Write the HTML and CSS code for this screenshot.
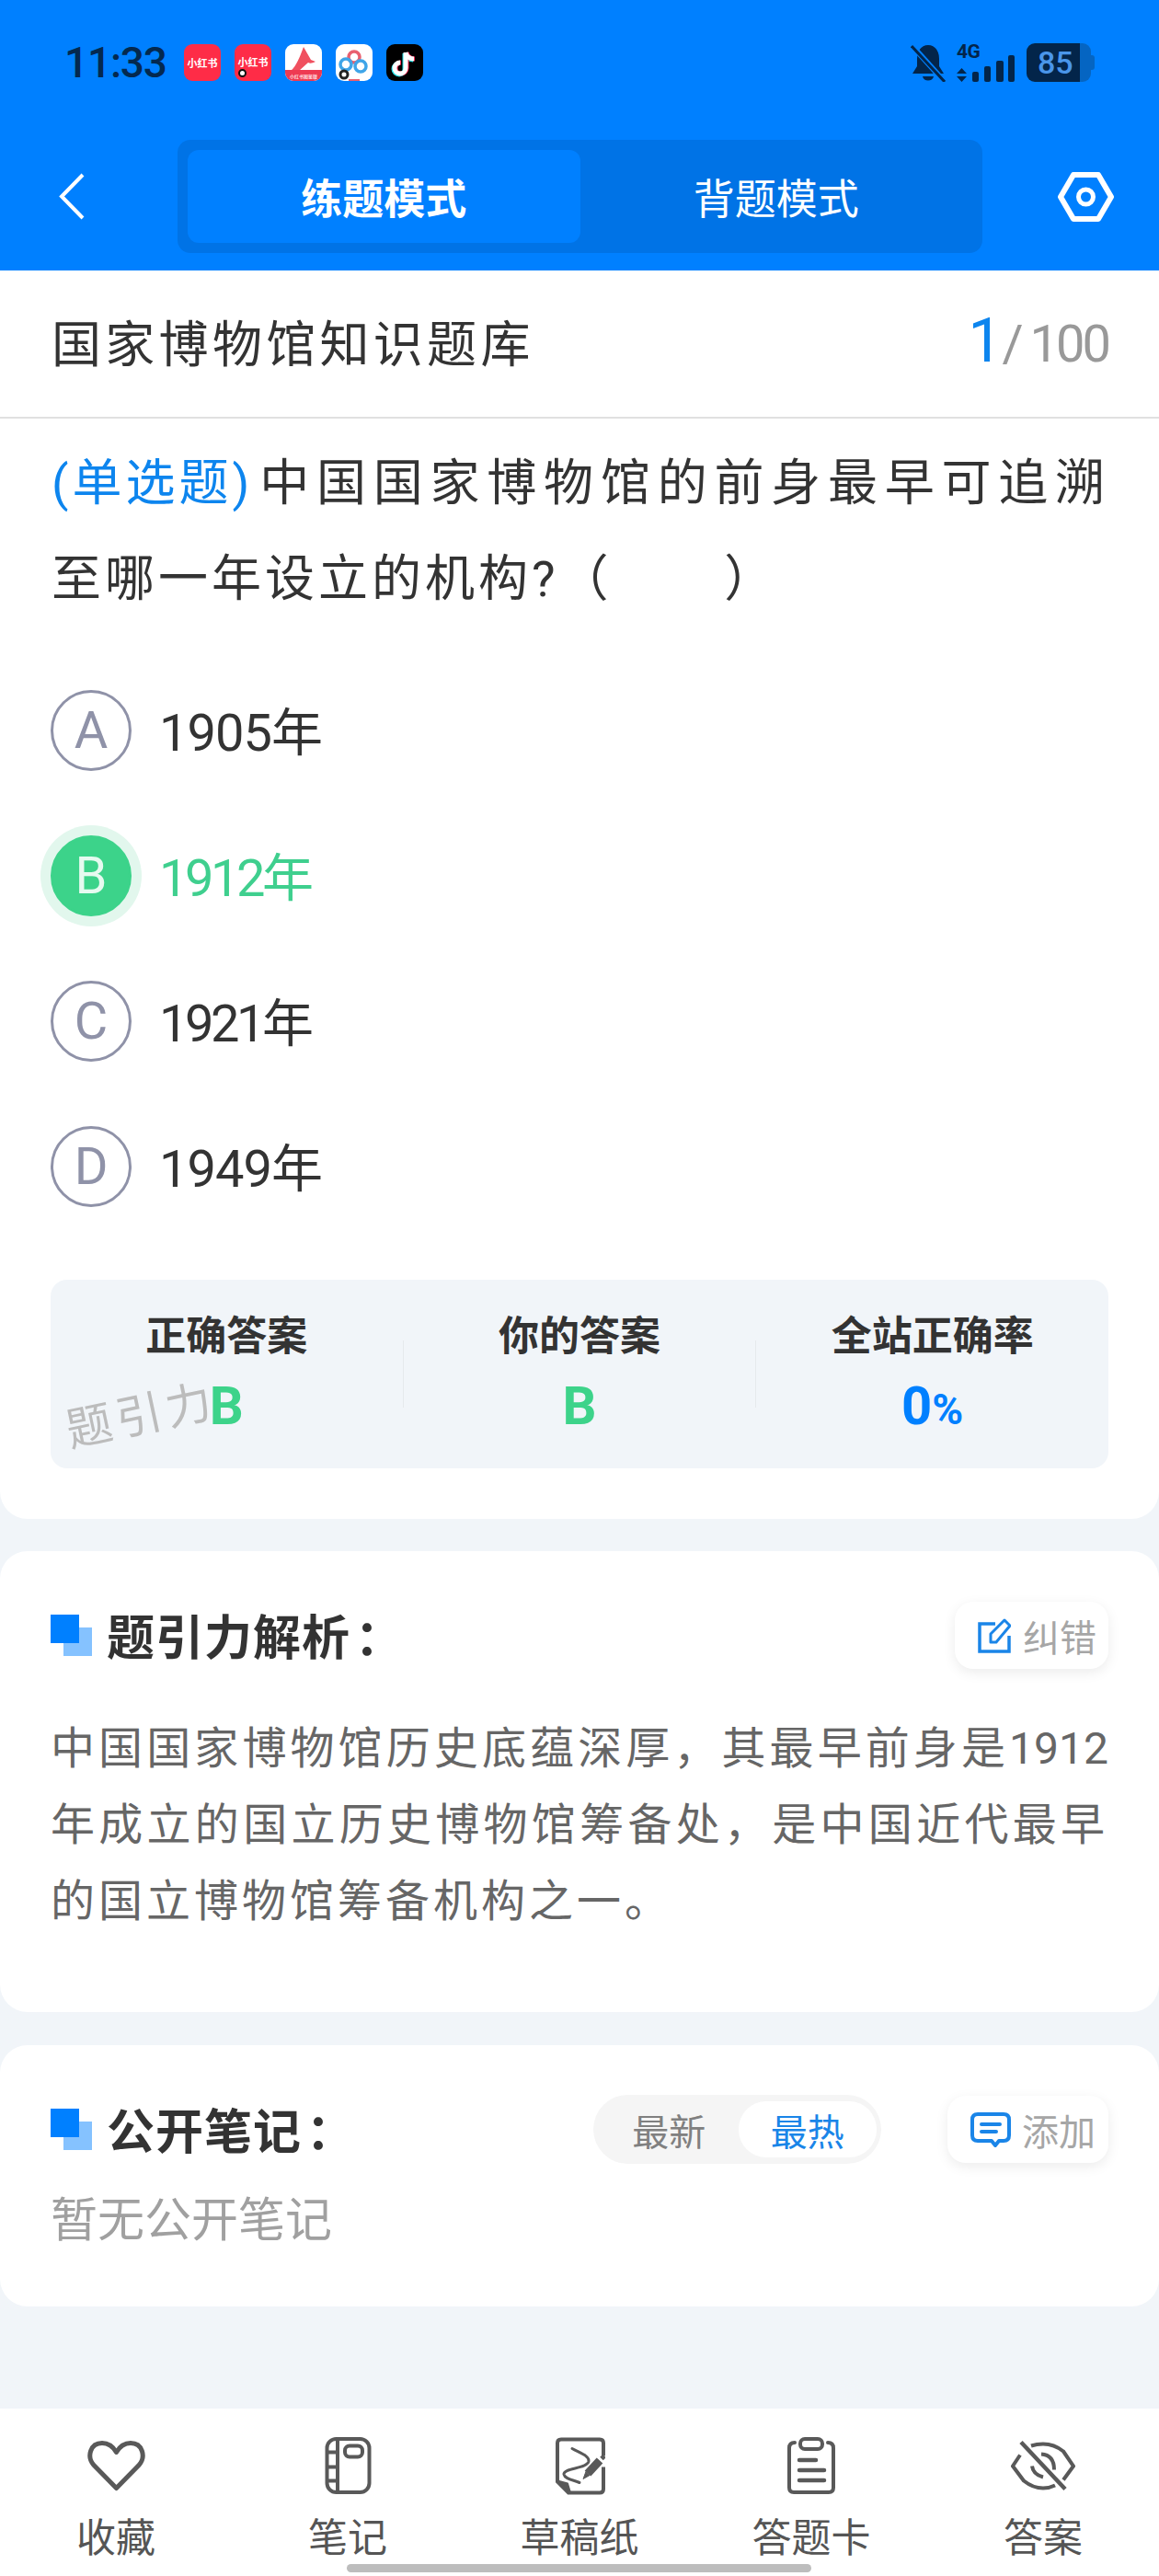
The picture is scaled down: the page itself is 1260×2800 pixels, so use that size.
FILE: index.html
```html
<!DOCTYPE html>
<html lang="zh-CN">
<head>
    <meta charset="UTF-8">
    <meta name="viewport" content="width=device-width, initial-scale=1.0">
    <title>国家博物馆知识题库</title>
    <link rel="stylesheet" href="styles.css">
</head>
<body>
<div class="page">
    <header class="header">
        <div class="status">
            <span class="time">11:33</span>
            <div class="apps">
                <span class="app app-red">小红书</span>
                <span class="app app-red app-narrow">小红书<i class="rec"></i></span>
                <span class="app app-white">
                    <svg viewBox="0 0 40 40" width="40" height="40">
                        <path d="M20 3 L28 17 L33 19 C29 21 27 21 25 20 L15 29 L6 29 C12 24 16 14 20 3Z" fill="#f0505f"/>
                        <path d="M0 28 H40 V33 A7 7 0 0 1 33 40 H7 A7 7 0 0 1 0 33Z" fill="#ee3a52"/>
                        <text x="20" y="37" class="app-band">小红书图鉴版</text>
                    </svg>
                </span>
                <span class="app app-white">
                    <svg viewBox="0 0 40 40" width="40" height="40">
                        <circle cx="20" cy="14" r="6" fill="none" stroke="#e9606f" stroke-width="3.5"/>
                        <circle cx="11" cy="22" r="6" fill="none" stroke="#3fa5e8" stroke-width="3.5"/>
                        <circle cx="27" cy="24" r="6" fill="none" stroke="#3fa5e8" stroke-width="3.5"/>
                        <circle cx="9" cy="33" r="4" fill="#fff" stroke="#222" stroke-width="3"/>
                        <rect x="14" y="38" width="12" height="2" fill="#e9606f"/>
                    </svg>
                </span>
                <span class="app app-black">
                    <svg viewBox="0 0 40 40" width="40" height="40" fill="none" stroke-width="5">
                        <path d="M21 9 V26 A6 6 0 1 1 15 20 M21 9 C22 13 25 16 30 16" stroke="#25e0e6" transform="translate(-1 1)"/>
                        <path d="M21 9 V26 A6 6 0 1 1 15 20 M21 9 C22 13 25 16 30 16" stroke="#fe2c55" transform="translate(1 0)"/>
                        <path d="M21 9 V26 A6 6 0 1 1 15 20 M21 9 C22 13 25 16 30 16" stroke="#fff"/>
                    </svg>
                </span>
            </div>
            <div class="indicators">
                <svg class="bell" viewBox="0 0 38 42" width="38" height="42">
                    <path d="M19 2 C27 2 31 9 31 17 V25 L36 33 H2 L7 25 V17 C7 9 11 2 19 2Z M13 36 H25 C24 42 14 42 13 36Z" fill="#03254a"/>
                    <path d="M1 2 L36 41" stroke="#0080ff" stroke-width="6"/>
                    <path d="M1 3 L37 42" stroke="#03254a" stroke-width="3"/>
                </svg>
                <div class="signal">
                    <span class="signal-text">4G</span>
                    <svg viewBox="0 0 63 42" width="63" height="42">
                        <path d="M5.5 27 L11 33 H0Z M5.5 42 L11 36 H0Z" fill="#03254a"/>
                        <rect x="17" y="31" width="7" height="11" rx="2" fill="#03254a"/>
                        <rect x="30" y="25" width="7" height="17" rx="2" fill="#03254a"/>
                        <rect x="43" y="19" width="8" height="23" rx="2" fill="#03254a"/>
                        <rect x="56" y="13" width="7" height="29" rx="2" fill="#03254a"/>
                    </svg>
                </div>
                <div class="battery"><span class="battery-level">85</span></div>
            </div>
        </div>
        <nav class="nav">
            <svg class="back" viewBox="0 0 28 51" width="28" height="51">
                <path d="M26 2 L3 25.5 L26 49" fill="none" stroke="#fff" stroke-width="4"/>
            </svg>
            <div class="mode">
                <span class="mode-item active">练题模式</span>
                <span class="mode-item">背题模式</span>
            </div>
            <svg class="settings" viewBox="0 0 61 54" width="61" height="54" fill="none" stroke="#fff">
                <path d="M17 3 H44 L58 27 L44 51 H17 L3 27Z" stroke-width="6" stroke-linejoin="round"/>
                <circle cx="30.5" cy="27" r="8" stroke-width="5"/>
            </svg>
        </nav>
    </header>

    <section class="card card-question">
        <div class="paper-title">
            <span class="paper-name">国家博物馆知识题库</span>
            <span class="count"><b>1</b><i>/</i>100</span>
        </div>
        <div class="question">
            <p class="question-first"><span class="qtype">(单选题)</span><span>中国国家博物馆的前身最早可追溯</span></p>
            <p>至哪一年设立的机构?（&nbsp;&nbsp;&nbsp;&nbsp;&nbsp;&nbsp;&nbsp;）</p>
        </div>

        <div class="options">
            <div class="option">
                <span class="option-key">A</span>
                <span class="option-text"><span class="digits">1905</span>年</span>
            </div>
            <div class="option selected">
                <span class="option-key">B</span>
                <span class="option-text"><span class="digits tight">1912</span>年</span>
            </div>
            <div class="option">
                <span class="option-key">C</span>
                <span class="option-text"><span class="digits tight">1921</span>年</span>
            </div>
            <div class="option">
                <span class="option-key">D</span>
                <span class="option-text"><span class="digits">1949</span>年</span>
            </div>
        </div>

        <div class="result">
            <div class="stat">
                <div class="stat-label">正确答案</div>
                <div class="stat-value green">B</div>
            </div>
            <div class="stat-sep"></div>
            <div class="stat">
                <div class="stat-label">你的答案</div>
                <div class="stat-value green">B</div>
            </div>
            <div class="stat-sep"></div>
            <div class="stat">
                <div class="stat-label">全站正确率</div>
                <div class="stat-value blue">0<small>%</small></div>
            </div>
            <span class="watermark">题引力</span>
        </div>
    </section>

    <section class="card card-analysis">
        <div class="card-head">
            <svg class="bullet" viewBox="0 0 45 45" width="45" height="45">
                <rect x="14" y="14" width="31" height="31" fill="#85c2ff"/>
                <rect width="31" height="31" fill="#0080ff"/>
            </svg>
            <h2 class="card-title">题引力解析<span class="colon">：</span></h2>
            <button class="tool-btn">
                <svg viewBox="0 0 36 38" width="36" height="38" fill="none" stroke="#1a85e8" stroke-width="3.5">
                    <path d="M19 6 H2 V36 H34 V19"/>
                    <path d="M14 26 V17 L29 2 L35 8 L20 26Z" stroke-width="3" stroke-linejoin="round"/>
                </svg>
                <span>纠错</span>
            </button>
        </div>
        <p class="analysis">中国国家博物馆历史底蕴深厚，其最早前身是<span class="num">1912</span>年成立的国立历史博物馆筹备处，是中国近代最早的国立博物馆筹备机构之一。</p>
    </section>

    <section class="card card-notes">
        <div class="card-head">
            <svg class="bullet" viewBox="0 0 45 45" width="45" height="45">
                <rect x="14" y="14" width="31" height="31" fill="#85c2ff"/>
                <rect width="31" height="31" fill="#0080ff"/>
            </svg>
            <h2 class="card-title">公开笔记<span class="colon">：</span></h2>
            <div class="sort">
                <span class="sort-item">最新</span>
                <span class="sort-item active">最热</span>
            </div>
            <button class="tool-btn tool-add">
                <svg viewBox="0 0 44 38" width="44" height="38" fill="none" stroke="#1a85e8" stroke-width="4">
                    <path d="M8 2 H36 Q42 2 42 8 V25 Q42 31 36 31 H31 L27 36 L23 31 H8 Q2 31 2 25 V8 Q2 2 8 2Z" stroke-linejoin="round"/>
                    <path d="M12 13 H32 M12 21 H28" stroke-linecap="round"/>
                </svg>
                <span>添加</span>
            </button>
        </div>
        <p class="empty">暂无公开笔记</p>
    </section>

    <footer class="tabbar">
        <div class="tab">
            <svg viewBox="0 0 63 55" width="63" height="55" fill="none" stroke="#595959" stroke-width="5" stroke-linejoin="round">
                <path d="M31.5 52 L7 27 C-1 18 3 3 16 3 C23 3 28 7 31.5 13 C35 7 40 3 47 3 C60 3 64 18 56 27Z"/>
            </svg>
            <span>收藏</span>
        </div>
        <div class="tab">
            <svg viewBox="0 0 51 63" width="51" height="63" fill="none" stroke="#595959" stroke-width="4">
                <rect x="2.5" y="2.5" width="46" height="58" rx="10"/>
                <path d="M14 3 V60 M3 17 H14 M3 33 H14 M3 48 H14"/>
                <rect x="22" y="10" width="19" height="12" rx="5"/>
            </svg>
            <span>笔记</span>
        </div>
        <div class="tab">
            <svg viewBox="0 0 55 63" width="55" height="63" fill="none" stroke="#595959" stroke-width="4">
                <path d="M53 21 V7 Q53 3 49 3 H7 Q3 3 3 7 V49 L15 61 H49 Q53 61 53 57 V33"/>
                <path d="M3 48 L14 51 L17 61 Z" fill="#595959" stroke-width="2" stroke-linejoin="round"/>
                <path d="M19 13 C28 18 38 21 37 27 C35 35 9 34 10 41 C11 46 20 47 27 50" stroke-width="3" stroke-linecap="round"/>
                <path d="M36 40 L49 26" stroke-width="9"/>
                <path d="M31 46 L34 38 L38 42Z" fill="#595959" stroke-width="1"/>
                <path d="M51 24 L54 21" stroke-width="5"/>
            </svg>
            <span>草稿纸</span>
        </div>
        <div class="tab">
            <svg viewBox="0 0 54 62" width="54" height="62" fill="none" stroke="#595959" stroke-width="4" stroke-linecap="round">
                <rect x="15" y="2" width="24" height="11" rx="5"/>
                <path d="M9 6 Q3 6 3 12 V55 Q3 60 8 60 H46 Q51 60 51 55 V12 Q51 6 45 6"/>
                <path d="M14 25 H32 M14 36 H41 M14 47 H41" stroke-width="4.5"/>
            </svg>
            <span>答题卡</span>
        </div>
        <div class="tab">
            <svg viewBox="0 0 70 55" width="70" height="55" fill="none" stroke="#595959" stroke-width="4">
                <path d="M10 16 L2 28 L14 44 Q24 52 35 52 Q42 52 48 49 M57 43 L68 28 L57 12 Q47 4 35 4 Q28 4 22 6"/>
                <path d="M33 15 Q47 16 47 32 M23 28 Q24 37 35 40"/>
                <path d="M11 2 L59 53" stroke-width="4.5"/>
            </svg>
            <span>答案</span>
        </div>
        <span class="home-bar"></span>
    </footer>
</div>
</body>
</html>
```

FILE: styles.css
```css
* {
    box-sizing: border-box;
}
body {
    margin: 0;
    font-family: Roboto, "Noto Sans CJK SC", sans-serif;
    color: #333;
}
p, h2 {
    margin: 0;
}
.page {
    width: 1260px;
    height: 2800px;
    overflow: hidden;
    display: flex;
    flex-direction: column;
    background-color: #f1f5f9;
}

/* header */
.header {
    height: 294px;
    flex-shrink: 0;
    background-color: #0080ff;
    padding-top: 47px;
}
.status {
    height: 42px;
    display: flex;
    align-items: center;
    padding-left: 70px;
}
.time {
    width: 130px;
    font-size: 46px;
    font-weight: 500;
    letter-spacing: -1.2px;
    color: #04294f;
}
.apps {
    display: flex;
    gap: 15px;
    height: 40px;
}
.app {
    position: relative;
    width: 40px;
    height: 40px;
    border-radius: 9px;
    overflow: hidden;
    display: flex;
    align-items: center;
    justify-content: center;
    font-size: 11px;
    font-weight: 700;
    color: #fff;
}
.app-red {
    background-color: #fe2c47;
}
.app-narrow {
    padding-bottom: 2px;
}
.app-white {
    background-color: #fff;
}
.app-black {
    background-color: #000;
}
.app-band {
    font-size: 5px;
    fill: #ffd9de;
    text-anchor: middle;
}
.rec {
    position: absolute;
    left: 4px;
    bottom: 4px;
    width: 9px;
    height: 9px;
    border-radius: 50%;
    background-color: #fff;
    border: 2px solid #111;
}
.indicators {
    margin-left: auto;
    margin-right: 74px;
    display: flex;
    align-items: center;
}
.signal {
    position: relative;
    margin-left: 12px;
    height: 42px;
}
.signal-text {
    position: absolute;
    left: 0;
    top: -2px;
    font-size: 21px;
    line-height: 22px;
    font-weight: 700;
    color: #03254a;
    letter-spacing: -0.5px;
}
.battery {
    position: relative;
    margin-left: 13px;
    width: 70px;
    height: 42px;
    border-radius: 9px;
    background: linear-gradient(90deg, #03254a 83%, #0565c2 83%);
    padding-left: 12px;
    line-height: 42px;
    font-size: 34px;
    font-weight: 500;
    color: #4a96ea;
}
.battery::after {
    content: "";
    position: absolute;
    right: -4px;
    top: 13px;
    width: 4px;
    height: 16px;
    border-radius: 0 3px 3px 0;
    background-color: #0565c2;
}
.nav {
    margin-top: 63px;
    display: flex;
    align-items: center;
}
.back {
    margin-left: 64px;
}
.mode {
    margin-left: 101px;
    width: 875px;
    height: 123px;
    padding: 11px;
    display: flex;
    border-radius: 14px;
    background-color: #0073e6;
}
.mode-item {
    flex: 1;
    display: flex;
    align-items: center;
    justify-content: center;
    font-size: 45px;
    color: #fff;
}
.mode-item.active {
    font-weight: 700;
    border-radius: 12px;
    background-color: #0080ff;
}
.settings {
    margin-left: 82px;
}

/* cards */
.card {
    background-color: #fff;
    border-radius: 30px;
    margin-top: 36px;
    padding: 55px 55px 78px;
}
.card-question {
    margin-top: 0;
    padding: 0 55px 55px;
    border-radius: 0 0 30px 30px;
}
.card-analysis {
    margin-top: 35px;
    padding-bottom: 79px;
}
.card-notes {
    padding-bottom: 63px;
}
.paper-title {
    height: 161px;
    margin: 0 -55px;
    padding: 0 55px 6px 56px;
    display: flex;
    align-items: center;
    justify-content: space-between;
    border-bottom: 2px solid #e0e0e0;
}
.paper-name {
    font-size: 54px;
    letter-spacing: 4.3px;
}
.count {
    font-size: 56px;
    letter-spacing: -3px;
    color: #999;
}
.count b {
    font-size: 66px;
    font-weight: 400;
    color: #0d85ee;
}
.count i {
    font-style: normal;
    margin: 0 10px 0 3px;
}
.question {
    margin-top: 19px;
    padding-left: 1px;
    font-size: 54px;
    letter-spacing: 4px;
    line-height: 104px;
}
.question-first {
    display: flex;
    justify-content: space-between;
    text-align-last: justify;
}
.question-first span:last-child {
    flex: 1;
}
.qtype {
    margin-right: 7px;
    color: #0d85ee;
}
.options {
    margin-top: 33px;
}
.option {
    height: 158px;
    display: flex;
    align-items: center;
    gap: 30px;
}
.option-key {
    width: 88px;
    height: 88px;
    border: 3px solid #8f92a8;
    border-radius: 50%;
    display: flex;
    align-items: center;
    justify-content: center;
    font-size: 56px;
    color: #8f92a8;
}
.option-text {
    font-size: 56px;
    padding-bottom: 6px;
}
.digits {
    letter-spacing: -1px;
}
.digits.tight {
    letter-spacing: -3.5px;
}
.selected .option-key {
    border-color: #3cd38a;
    background-color: #3cd38a;
    box-shadow: 0 0 0 11px #e2f7ed;
    color: #e6faf0;
}
.selected .option-text {
    color: #3fcf8e;
}

/* result box */
.result {
    position: relative;
    margin-top: 44px;
    height: 205px;
    display: flex;
    align-items: center;
    border-radius: 18px;
    background-color: #f1f5f9;
}
.stat {
    flex: 1;
    height: 100%;
    padding-top: 40px;
    text-align: center;
}
.stat-label {
    font-size: 44px;
    font-weight: 700;
    line-height: 44px;
}
.stat-value {
    margin-top: 21px;
    font-size: 58px;
    font-weight: 700;
    line-height: 64px;
}
.stat-value small {
    font-size: 46px;
}
.green {
    color: #3dd38a;
}
.blue {
    color: #0080ff;
}
.stat-sep {
    width: 1px;
    height: 73px;
    background-color: #e6e9ec;
}
.watermark {
    position: absolute;
    left: 16px;
    top: 118px;
    font-size: 50px;
    letter-spacing: 5px;
    line-height: 60px;
    color: #bcbcbc;
    transform: rotate(-12deg);
}

/* analysis + notes */
.card-head {
    height: 73px;
    display: flex;
    align-items: center;
}
.bullet {
    margin-right: 16px;
}
.card-title {
    flex: 1;
    padding-bottom: 3px;
    font-size: 52px;
    font-weight: 700;
    letter-spacing: 1px;
}
.colon {
    font-family: "Noto Sans CJK TC", sans-serif;
    margin-left: 5px;
}
.tool-btn {
    width: 167px;
    height: 73px;
    padding: 0 0 0 25px;
    display: flex;
    align-items: center;
    gap: 13px;
    border: none;
    border-radius: 20px;
    background-color: #fff;
    box-shadow: 0 4px 14px rgba(0, 0, 0, 0.08);
    font-family: inherit;
    font-size: 40px;
    color: #a6a6a6;
}
.tool-add {
    width: 175px;
    margin-left: 72px;
    gap: 12px;
}
.analysis {
    margin-top: 45px;
    font-size: 48px;
    letter-spacing: 4px;
    line-height: 83px;
    color: #666;
    text-align: justify;
}
.num {
    letter-spacing: 0;
}
.sort {
    width: 313px;
    height: 75px;
    padding: 7px 5px 7px 7px;
    display: flex;
    border-radius: 38px;
    background-color: #f5f5f5;
}
.sort-item {
    flex: 1;
    display: flex;
    align-items: center;
    justify-content: center;
    font-size: 40px;
    color: #808080;
}
.sort-item.active {
    border-radius: 30px;
    background-color: #fff;
    color: #1a85e8;
}
.empty {
    margin-top: 33px;
    font-size: 51px;
    line-height: 60px;
    color: #a0a0a0;
}

/* bottom tabs */
.tabbar {
    position: relative;
    margin-top: auto;
    height: 182px;
    flex-shrink: 0;
    display: flex;
    padding-top: 30px;
    background-color: #fff;
}
.tab {
    flex: 1;
    display: flex;
    flex-direction: column;
    align-items: center;
    font-size: 43px;
    line-height: 48px;
    color: #555;
}
.tab svg {
    height: 64px;
    margin-bottom: 23px;
}
.home-bar {
    position: absolute;
    left: 377px;
    bottom: 4px;
    width: 505px;
    height: 9px;
    border-radius: 5px;
    background-color: #bdbdbd;
}
```
